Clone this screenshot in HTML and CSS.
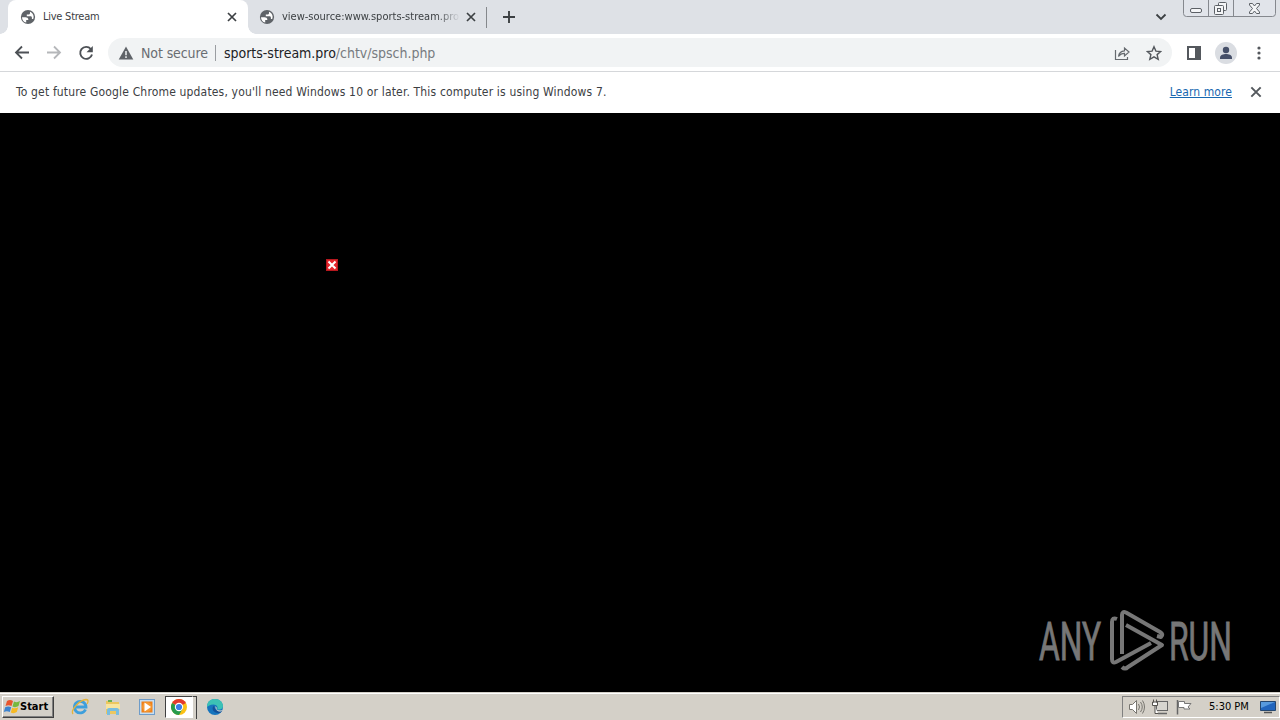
FILE: index.html
```html
<!DOCTYPE html>
<html lang="en">
<head>
<meta charset="utf-8">
<title>Live Stream</title>
<link rel="stylesheet" href="styles.css">
</head>
<body>
<svg class="defs" width="0" height="0">
  <symbol id="globe" viewBox="0 0 16 16">
    <circle cx="8" cy="8" r="7.1" fill="#5f6368"/>
    <path d="M2 8.2h3.500c1.500 0 2.800.8 2.800 2.100v.8H6.200v2.500C3.600 12.900 2 10.800 2 8.200zM10 2.700v1.200c0 1-.8 1.600-1.700 1.600H6.800v1.700h3.700c1 0 1.400.7 1.400 1.500v1.200h1.300c1.300-2.800-.3-6-3.200-7.200z" fill="#fff"/>
  </symbol>
  <symbol id="close" viewBox="0 0 12 12">
    <path d="M2 2l8 8M10 2l-8 8" fill="none" stroke="currentColor" stroke-width="1.700"/>
  </symbol>
</svg>

<div class="tabstrip">
  <div class="tab active">
    <svg class="favicon"><use href="#globe"/></svg>
    <span class="title"><span class="t-live">Live Stream</span></span>
    <svg class="x"><use href="#close"/></svg>
  </div>
  <div class="tab">
    <svg class="favicon"><use href="#globe"/></svg>
    <span class="title fade"><span class="t-source">view-source:www.sports-stream.pro</span></span>
    <svg class="x"><use href="#close"/></svg>
  </div>
  <svg class="newtab" viewBox="0 0 14 14"><path d="M7 1v12M1 7h12" stroke="#3c4043" stroke-width="1.900"/></svg>
  <svg class="chevron" viewBox="0 0 12 8"><path d="M1.500 1.500L6 6l4.500-4.500" fill="none" stroke="#3c4043" stroke-width="1.800"/></svg>
  <svg class="caption" viewBox="0 0 94 18">
    <path d="M.5 0v13.500q0 3 3 3h86q3 0 3-3V0M25.500 0v16M50.500 0v16" fill="#e1e4ea" stroke="#85888e"/>
    <g fill="#f4f5f7" stroke="#5c6066">
      <rect x="7.500" y="8.500" width="11" height="4" rx="1.500"/>
      <rect x="35.500" y="2.500" width="8" height="8" rx="1"/>
      <rect x="31.500" y="5.500" width="9" height="9" rx="1"/>
      <rect x="34.500" y="8.500" width="3" height="3"/>
      <path d="M66.500 3.500h3l2 2.500 2-2.500h3v1.500L73.500 8.500l3 3.500v1.500h-3l-2-2.500-2 2.500h-3V12l3-3.500-3-3.500z"/>
    </g>
  </svg>
</div>

<div class="toolbar">
  <svg class="nav back" viewBox="0 0 16 16"><path d="M15 7.500H2M8 1.500l-6 6 6 6" fill="none" stroke="#4d5156" stroke-width="1.800"/></svg>
  <svg class="nav forward" viewBox="0 0 16 16"><path d="M1 7.500h13M8 1.500l6 6-6 6" fill="none" stroke="#b5b7ba" stroke-width="1.800"/></svg>
  <svg class="nav reload" viewBox="0 0 16 16"><path d="M12.800 4A6 6 0 1 0 14 9.500" fill="none" stroke="#4d5156" stroke-width="1.900"/><path d="M14.800 1v6.300H8.500z" fill="#4d5156"/></svg>
  <div class="omnibox">
    <svg class="warn" viewBox="0 0 16 14"><path d="M8 .5L15.300 13.500H.7z" fill="#5f6368"/><path d="M8 5v4.200M8 10.200v1.700" stroke="#f1f3f4" stroke-width="1.500"/></svg>
    <span class="security">Not secure</span>
    <span class="url">sports-stream.pro<i>/chtv/spsch.php</i></span>
    <svg class="share" viewBox="0 0 16 16"><path d="M1.500 5v9.500h12V12" fill="none" stroke="#666a6f" stroke-width="1.200"/><path d="M4.500 11.500c.5-3.800 2.500-5.500 6-5.700V3l4.500 4-4.500 4V8.300c-2.500 0-4.500.9-6 3.200z" fill="none" stroke="#666a6f" stroke-width="1.200"/></svg>
    <svg class="star" viewBox="0 0 16 16"><path d="M8 1.700l1.900 4.400 4.800.4-3.600 3.100 1.100 4.700L8 11.800l-4.200 2.500 1.100-4.700-3.600-3.100 4.800-.4z" fill="none" stroke="#54585d" stroke-width="1.400"/></svg>
  </div>
  <svg class="panel" viewBox="0 0 14 14"><path d="M0 0h14v14H0zM2 2v10h6V2z" fill="#54585d" fill-rule="evenodd"/></svg>
  <svg class="avatar" viewBox="0 0 22 22"><circle cx="11" cy="11" r="11" fill="#dadde2"/><circle cx="11" cy="8" r="3.200" fill="#465069"/><path d="M5 17v-1.500c0-2.500 3.500-3.500 6-3.500s6 1 6 3.500V17z" fill="#465069"/></svg>
  <svg class="menu" viewBox="0 0 4 14"><g fill="#54585d"><circle cx="2" cy="2" r="1.600"/><circle cx="2" cy="7" r="1.600"/><circle cx="2" cy="12" r="1.600"/></g></svg>
</div>

<div class="infobar">
  <span class="message">To get future Google Chrome updates, you'll need Windows 10 or later. This computer is using Windows 7.</span>
  <a class="learn">Learn more</a>
  <svg class="x"><use href="#close"/></svg>
</div>

<div class="page">
  <svg class="broken" viewBox="0 0 12 12"><rect x=".5" y=".5" width="11" height="11" fill="#e3242b" stroke="#b5181e"/><path d="M2.500 2.500l7 7M9.500 2.500l-7 7" stroke="#fff" stroke-width="2"/></svg>
  <svg class="watermark" viewBox="0 0 220 80">
    <g fill="#777" stroke="#777" stroke-width=".9">
      <text x="9" y="60" textLength="62" lengthAdjust="spacingAndGlyphs">ANY</text>
      <text x="139" y="60" textLength="63" lengthAdjust="spacingAndGlyphs">RUN</text>
    </g>
    <g fill="none" stroke="#777" stroke-width="4" stroke-linejoin="round">
      <path d="M92 54V15q0-4 4-2.500L130 32q4 2.500 1 5l-4-1"/>
      <path d="M87 19q-5-2-5 3v37q0 5 4 3l35-19"/>
      <path d="M96 25l36 20L98 67q-3 3-6 0"/>
    </g>
  </svg>
</div>

<div class="taskbar">
  <div class="start">
    <svg class="flag" viewBox="0 0 18 16"><path d="M4 2q3-2 6 0L8.500 7q-3-1.500-6 0z" fill="#e8552d"/><path d="M11 2.500q3 1.500 6-.5L15.500 7q-3 2-6 .5z" fill="#76b83f"/><path d="M2.200 8.200q3-1.500 6 0L6.800 13q-3-1.500-6 0z" fill="#3c83cf"/><path d="M9.200 8.700q3 1.500 6-.5L13.800 13q-3 2-6 .5z" fill="#f6b923"/></svg>
    <b>Start</b>
  </div>
  <svg class="launch ie" viewBox="0 0 18 18"><path d="M14.500 11.500A5.800 5.800 0 1 1 15 9H5" fill="none" stroke="#3e9fdc" stroke-width="2.800"/><path d="M2 16C-1 12 9 2 15 1.500c3 0 2 3 1 4.500" fill="none" stroke="#e5b33a" stroke-width="1.300"/></svg>
  <svg class="launch explorer" viewBox="0 0 18 18"><path d="M2 3h5l1 1h7v12H2z" fill="#ecc75f"/><path d="M4 2h4v2H4z" fill="#68af52"/><path d="M2 6h14v5H2z" fill="#f8e49e"/><path d="M3 17v-5q0-2 2-2h8q2 0 2 2v5h-3v-4H6v4z" fill="#79bddf"/></svg>
  <svg class="launch wmp" viewBox="0 0 18 18"><rect x="1.500" y="1.500" width="15" height="15" fill="#c5def3" stroke="#6e9cc9"/><rect x="3.500" y="3.500" width="11" height="11" fill="#f08019"/><circle cx="9" cy="9" r="4.800" fill="#f59a35"/><path d="M6.500 4.500v9L13 9z" fill="#fff"/></svg>
  <div class="running">
    <svg class="chrome" viewBox="0 0 18 18"><circle cx="9" cy="9" r="8" fill="#fbc116"/><path d="M9 9L2.070 5A8 8 0 0 1 15.930 5z" fill="#e33b2e"/><path d="M9 9L2.070 5A8 8 0 0 0 9 17l3.500-6z" fill="#269b4c"/><circle cx="9" cy="9" r="4.200" fill="#fff"/><circle cx="9" cy="9" r="3.100" fill="#3a7de8"/></svg>
  </div>
  <svg class="launch edge" viewBox="0 0 18 18"><circle cx="9" cy="9" r="8" fill="#1674bd"/><path d="M1 9C1 3 5 1 9 1c5 0 8 3.500 8 7 0 3-3 4-6 3.500 1.500-2 0-5-3.500-5C4 6.500 2 8 1 9z" fill="#3cc1b5"/><path d="M8 7.500c-3 3-1 7 4 7.500 2 0 3.500-1 4.200-1.800C12 14 8.500 12 8 7.500z" fill="#12509a"/><path d="M9.500 8q2 1.500 1 3.500 3 1.500 6 .5l-1.500 1.500C11 14 9 11 9.500 8z" fill="#d4d0c8"/></svg>
  <div class="tray">
    <svg class="volume" viewBox="0 0 18 16"><path d="M1.500 5.500h3l4-4v13l-4-4h-3z" fill="#fff" stroke="#77756f"/><path d="M10.500 5q2 3 0 6M12.500 3q3.500 5 0 10M14.500 1.500q4 6.500 0 13" fill="none" stroke="#77756f"/></svg>
    <svg class="network" viewBox="0 0 18 16"><rect x="4.500" y="2.500" width="11" height="9" fill="#d7d5cf" stroke="#666"/><path d="M6 14.500h9" stroke="#666" stroke-width="1.500"/><path d="M1.500.5v3M4.500.5v3M.5 3h5v3.500h-5zM3 7v7.500h3" fill="#fff" stroke="#55534e"/></svg>
    <svg class="action" viewBox="0 0 18 16"><path d="M1.500 1v14.500" stroke="#666" stroke-width="1.500"/><path d="M2.500 2.500h6v2h6.500l-3 3.500 2 2H8V8.500H2.500z" fill="#fff" stroke="#777"/></svg>
    <span class="clock">5:30 PM</span>
    <svg class="desktop" viewBox="0 0 16 14"><path d="M.5 1.500h15v9H.5z" fill="#2165bd" stroke="#244770"/><path d="M1 2h14L1 8z" fill="#579ade"/><path d="M4 12.500h8" stroke="#555" stroke-width="1.500"/></svg>
  </div>
</div>
</body>
</html>
```
FILE: styles.css
```css
* { box-sizing: border-box; }
body { display: flex; flex-direction: column; width: 1280px; height: 720px; margin: 0; overflow: hidden; background: #000; color: #3c4043; font: 11px/16px "DejaVu Sans Condensed", "DejaVu Sans", sans-serif; font-stretch: condensed; }
svg { display: block; flex: none; }
span, a { white-space: nowrap; }
.defs { display: none; }

.tabstrip { display: flex; flex: none; height: 34px; padding-left: 8px; background: #dee1e6; }
.tab { position: relative; display: flex; align-items: center; width: 239px; padding: 0 9px 0 11px; }
.tab.active { width: 240px; padding: 0 10px 0 12px; border-radius: 8px 8px 0 0; background: #fff; }
.tab.active:before,
.tab.active:after { content: ""; position: absolute; bottom: 0; width: 8px; height: 8px; }
.tab.active:before { left: -8px; background: radial-gradient(circle at 0 0, #dee1e6 7.5px, #fff 8px); }
.tab.active:after { right: -8px; background: radial-gradient(circle at 100% 0, #dee1e6 7.5px, #fff 8px); }
.tab:not(.active) { border-right: 1px solid #85888c; border-image: linear-gradient(transparent 8px, #85888c 8px, #85888c 27px, transparent 27px) 1; border-width: 0 1px 0 0; }
.favicon { width: 16px; height: 16px; }
.title { flex: 1; margin-left: 7px; }
.fade { -webkit-mask-image: linear-gradient(to right, #000 155px, transparent 178px); }
.t-live { letter-spacing: -0.25px; }
.t-source { letter-spacing: 0; }
.x { width: 12px; height: 12px; color: #3c4043; }
.newtab { width: 14px; height: 14px; margin: 10px 0 0 15px; }
.chevron { width: 12px; height: 8px; margin: 13px 16px 0 auto; }
.caption { width: 94px; height: 18px; margin-right: 3px; }

.toolbar { display: flex; flex: none; align-items: center; height: 38px; padding-left: 14px; border-bottom: 1px solid #d5d7da; background: #fff; }
.nav { width: 16px; height: 16px; margin-right: 16px; }
.reload { margin-right: 14px; }
.omnibox { display: flex; align-items: center; width: 1064px; height: 29px; padding: 0 10px; border-radius: 15px; background: #f1f3f4; font-size: 14px; }
.warn { width: 16px; height: 14px; }
.security { width: 75px; margin-left: 7px; border-right: 1px solid #9a9da1; color: #696d72; letter-spacing: -0.1px; }
.url { margin-left: 8px; color: #202124; letter-spacing: -0.02px; }
.url i { color: #777b80; font-style: normal; }
.share { width: 16px; height: 16px; margin: 0 16px 0 auto; }
.star { width: 16px; height: 16px; }
.panel { width: 14px; height: 14px; margin-left: 15px; }
.avatar { width: 22px; height: 22px; margin-left: 14px; }
.menu { width: 4px; height: 14px; margin-left: 20px; }

.infobar { display: flex; flex: none; align-items: center; height: 41px; padding: 0 17px 1px 16px; background: #fff; font-size: 12px; }
.message { letter-spacing: 0.165px; }
.learn { margin: 0 17px 0 auto; color: #1767b0; text-decoration: underline; letter-spacing: 0.08px; }
.infobar .x { width: 14px; height: 14px; color: #54585d; }

.page { position: relative; flex: 1; background: #000; }
.broken { position: absolute; left: 326px; top: 146px; width: 12px; height: 12px; }
.watermark { position: absolute; left: 1030px; top: 487px; width: 220px; height: 80px; }
.watermark text { font: 53px Roboto, sans-serif; }

.taskbar { display: flex; flex: none; align-items: center; height: 28px; padding: 1px 0 1px 2px; border-top: 1px solid #d4d0c8; background: #d4d0c8; box-shadow: inset 0 1px #fff; color: #000; }
.start { display: flex; align-items: center; width: 52px; height: 22px; border: 1px solid; border-color: #fff #404040 #404040 #fff; box-shadow: inset -1px -1px #808080; }
.start b { margin-left: -1px; letter-spacing: 0; }
.flag { width: 18px; height: 16px; }
.launch { width: 18px; height: 18px; }
.ie { margin-left: 17px; }
.explorer { margin-left: 15px; }
.wmp { margin-left: 16px; }
.running { display: flex; align-items: center; justify-content: center; position: relative; width: 28px; height: 22px; margin-left: 9px; border: 1px solid; border-color: #404040 #fff #fff #404040; background: #fff; }
.running:after { content: ""; position: absolute; left: 27px; top: -1px; width: 3px; height: 22px; border: solid #404040; border-width: 1px 1px 0 0; background: #d4d0c8; }
.chrome { width: 18px; height: 18px; }
.edge { margin-left: 13px; }
.tray { display: flex; align-items: center; width: 158px; height: 22px; margin-left: auto; padding-left: 5px; border: 1px solid; border-color: #808080 #fff #fff #808080; }
.volume, .network, .action { width: 18px; height: 16px; margin-right: 6px; }
.clock { width: 45px; margin-left: 9px; letter-spacing: 0; }
.desktop { width: 16px; height: 14px; margin-left: 6px; }
```
